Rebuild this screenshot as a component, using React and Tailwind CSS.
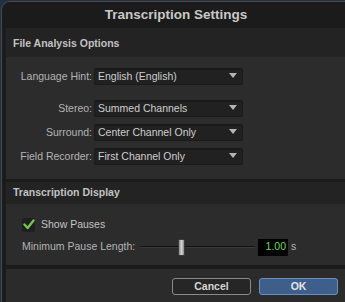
import React from "react";

const font = { fontFamily: '"Liberation Sans", Arial, sans-serif' };

function Select({ value }) {
  return (
    <div className="relative w-[149px] h-[17px] bg-[#212121] border border-[#1a1a1a] rounded-[2px] shadow-[inset_0_1px_0_#1a1a1a] flex items-center pl-[3px] text-[10.5px] text-[#cfcfcf]">
      <span>{value}</span>
      <svg className="absolute right-[5px] top-[4px]" width="8" height="5" viewBox="0 0 8 5">
        <path d="M0 0 H8 L4 5 Z" fill="#b5b5b5" />
      </svg>
    </div>
  );
}

function Row({ label, value, className = "" }) {
  return (
    <div className={"flex items-center " + className}>
      <div className="w-[88px] text-right pr-[2px] text-[10.5px] text-[#b4b4b4]">{label}</div>
      <Select value={value} />
    </div>
  );
}

export default function App() {
  return (
    <div className="w-[345px] h-[302px] bg-[#24303f] overflow-hidden" style={font}>
      <div className="ml-[1px] mt-[1px] h-[301px] rounded-tl-[9px] bg-[#1b1b1b] border-t border-l border-[#4a4a4a] flex flex-col overflow-hidden">
        {/* title */}
        <div className="h-[26px] flex items-center justify-center pl-[5px] text-[13.5px] font-bold text-[#c9c9c9]">
          Transcription Settings
        </div>
        {/* section 1 */}
        <div className="ml-[4px] flex flex-col">
          <div className="h-[29px] bg-[#232323] flex items-center pl-[7px] pt-[3px] text-[10.5px] font-bold text-[#c2c2c2]">
            File Analysis Options
          </div>
          <div className="h-[122px] bg-[#2c2c2c] flex flex-col pt-[11px]">
            <Row label="Language Hint:" value="English (English)" />
            <Row label="Stereo:" value="Summed Channels" className="mt-[15px]" />
            <Row label="Surround:" value="Center Channel Only" className="mt-[7px]" />
            <Row label="Field Recorder:" value="First Channel Only" className="mt-[7px]" />
          </div>
        </div>
        <div className="h-[3px]" />
        {/* section 2 */}
        <div className="ml-[4px] flex flex-col">
          <div className="h-[22px] bg-[#232323] flex items-center pl-[7px] text-[10.5px] font-bold text-[#c2c2c2]">
            Transcription Display
          </div>
          <div className="h-[61px] bg-[#2c2c2c] flex flex-col">
            <div className="flex items-center pl-[16px] pt-[13px]">
              <div className="w-[13px] h-[14px] bg-[#1f1f1f] rounded-[2px] flex items-center justify-center">
                <svg width="12" height="11" viewBox="0 0 12 11">
                  <path d="M1.5 5.5 L4.6 9 L10.5 1.5" stroke="#72c451" strokeWidth="2.4" fill="none" strokeLinecap="round" strokeLinejoin="round" />
                </svg>
              </div>
              <span className="ml-[6px] text-[10.5px] text-[#c4c4c4]">Show Pauses</span>
            </div>
            <div className="flex items-center pl-[16px] mt-[6px]">
              <span className="text-[10.5px] text-[#b4b4b4] w-[118px]">Minimum Pause Length:</span>
              <div className="relative w-[115px] h-[17px] flex items-center">
                <div className="w-full h-[2px] bg-[#121212] border-b border-[#3a3a3a]" />
                <div className="absolute left-[38px] top-0 w-[7px] h-[17px] rounded-[1px] bg-gradient-to-r from-[#8a8a8a] via-[#d4d4d4] to-[#8a8a8a] border border-[#3a3a3a]" />
              </div>
              <div className="ml-[3px] w-[30px] h-[17px] bg-black flex items-center justify-end pr-[2px] text-[10.5px] text-[#6fdc5a]">1.00</div>
              <span className="ml-[3px] text-[10.5px] text-[#b4b4b4]">s</span>
            </div>
          </div>
        </div>
        <div className="h-[4px]" />
        {/* footer */}
        <div className="ml-[4px] flex-1 bg-[#2b2b2b] flex items-start justify-end pt-[9px] pr-[7px] gap-[8px]">
          <div className="w-[79px] h-[17px] rounded-[3px] border border-[#8a8a8a] bg-[#262626] flex items-center justify-center text-[10.5px] font-bold text-[#d6d6d6]">
            Cancel
          </div>
          <div className="w-[79px] h-[17px] rounded-[3px] border border-[#6b8fbd] bg-[#3e5f8c] flex items-center justify-center text-[10.5px] font-bold text-[#e6e6e6]">
            OK
          </div>
        </div>
      </div>
    </div>
  );
}
